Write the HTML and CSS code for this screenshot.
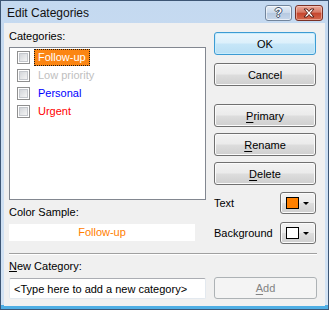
FILE: index.html
```html
<!DOCTYPE html>
<html lang="en">
<head>
    <meta charset="UTF-8">
    <title>Edit Categories</title>
    <link rel="stylesheet" href="styles.css">
</head>
<body>
    <div class="window">
        <div class="titlebar">
            <span class="title">Edit Categories</span>
            <div class="caption-buttons">
                <button class="cap-btn cap-help">?</button>
                <button class="cap-btn cap-close">
                    <svg width="14" height="10" viewBox="0 0 14 10">
                        <path d="M2 1 L5 1 L7 3.5 L9 1 L12 1 L8.5 5 L12 9 L9 9 L7 6.5 L5 9 L2 9 L5.5 5 Z" fill="#fff" stroke="#5b2018" stroke-width="1" stroke-linejoin="round"/>
                    </svg>
                </button>
            </div>
        </div>

        <div class="client">
            <div class="top">
                <div class="left-col">
                    <div class="lbl">Categories:</div>
                    <div class="listbox">
                        <div class="item">
                            <span class="check"></span>
                            <span class="name selected">Follow-up</span>
                        </div>
                        <div class="item">
                            <span class="check"></span>
                            <span class="name low">Low priority</span>
                        </div>
                        <div class="item">
                            <span class="check"></span>
                            <span class="name personal">Personal</span>
                        </div>
                        <div class="item">
                            <span class="check"></span>
                            <span class="name urgent">Urgent</span>
                        </div>
                    </div>
                    <div class="lbl sample-lbl">Color Sample:</div>
                    <div class="sample">Follow-up</div>
                </div>

                <div class="right-col">
                    <button class="btn btn-default">OK</button>
                    <button class="btn btn-cancel">Cancel</button>
                    <button class="btn btn-primary"><u>P</u>rimary</button>
                    <button class="btn btn-stack"><u>R</u>ename</button>
                    <button class="btn btn-stack"><u>D</u>elete</button>
                    <div class="color-row color-row-text">
                        <span>Text</span>
                        <button class="btn picker">
                            <span class="swatch swatch-orange"></span>
                            <span class="arrow"></span>
                        </button>
                    </div>
                    <div class="color-row color-row-bg">
                        <span>Background</span>
                        <button class="btn picker">
                            <span class="swatch swatch-white"></span>
                            <span class="arrow"></span>
                        </button>
                    </div>
                </div>
            </div>

            <div class="divider"></div>

            <div class="lbl new-lbl"><u>N</u>ew Category:</div>
            <div class="new-row">
                <input class="new-input" type="text" value="&lt;Type here to add a new category&gt;">
                <button class="btn btn-add" disabled><u>A</u>dd</button>
            </div>
        </div>
    </div>
</body>
</html>
```

FILE: styles.css
```css
/* Global settings */
:root {
    --client: #f0f0f0;
    --font-ui: 'Liberation Sans', Arial, sans-serif;
}

body {
    margin: 0;
    font-family: var(--font-ui);
    font-size: 11px;
    color: #000;
}

/* Window frame */
.window {
    width: 329px;
    height: 310px;
    box-sizing: border-box;
    border: 1px solid #3d5675;
    background: linear-gradient(#c4d9f0, #c9dcf1 30%, #d3e3f4 98.6%, #4faee4 98.6%);
    display: flex;
    flex-direction: column;
}

.titlebar {
    height: 22px;
    display: flex;
    align-items: center;
    padding: 0 5px 0 6px;
}

.title {
    font-size: 12px;
    color: #111;
    padding-top: 1px;
}

.caption-buttons {
    margin-left: auto;
    display: flex;
    gap: 3px;
    padding-top: 1px;
}

.cap-btn {
    height: 16px;
    border-radius: 3px;
    padding: 0;
    display: flex;
    align-items: center;
    justify-content: center;
}

.cap-help {
    width: 27px;
    border: 1px solid #72859c;
    background: linear-gradient(#e4edf7, #c9d8ea 50%, #b6c9e0 50%, #c6d6ea);
    box-shadow: inset 0 0 0 1px rgba(255, 255, 255, 0.6);
    font-family: var(--font-ui);
    font-size: 12px;
    font-weight: bold;
    color: #fff;
    text-shadow: 1px 0 #3f4f66, -1px 0 #3f4f66, 0 1px #3f4f66, 0 -1px #3f4f66;
}

.cap-close {
    width: 28px;
    border: 1px solid #7a3126;
    background: linear-gradient(#e9a99a, #d77a66 45%, #c5442d 50%, #d4684d);
    box-shadow: inset 0 0 0 1px rgba(255, 220, 210, 0.5);
}

/* Client area */
.client {
    flex: 1;
    margin: 0 3px 3px 3px;
    background: var(--client);
    padding: 7px 0 0 5px;
}

.top {
    display: flex;
    gap: 8px;
}

.left-col {
    width: 197px;
    display: flex;
    flex-direction: column;
}

.lbl {
    line-height: 13px;
    height: 13px;
}

.listbox {
    margin-top: 4px;
    height: 153px;
    box-sizing: border-box;
    border: 1px solid #828790;
    background: #fff;
}

.item {
    height: 18px;
    display: flex;
    align-items: center;
    padding-left: 7px;
}

.check {
    width: 13px;
    height: 13px;
    box-sizing: border-box;
    border: 1px solid #8f8f8f;
    background: #fff;
    position: relative;
}

.check::after {
    content: "";
    position: absolute;
    left: 1px;
    top: 1px;
    right: 1px;
    bottom: 1px;
    border: 1px solid #c4c7cc;
    background: linear-gradient(135deg, #d3d6da, #f4f4f4);
}

.name {
    margin-left: 4px;
    height: 17px;
    line-height: 15px;
    padding: 0 3px;
    box-sizing: border-box;
    border: 1px solid transparent;
}

.name.selected {
    background: #fb8512;
    color: #fff;
    border: 1px dotted #1a1a1a;
}

.name.low {
    color: #c0c0c0;
}

.name.personal {
    color: #0000ff;
}

.name.urgent {
    color: #ff0000;
}

.sample-lbl {
    margin-top: 6px;
}

.sample {
    margin-top: 5px;
    width: 186px;
    height: 17px;
    line-height: 17px;
    background: #fff;
    color: #ff8000;
    text-align: center;
}

/* Right column buttons */
.right-col {
    width: 102px;
    margin-top: 2px;
    display: flex;
    flex-direction: column;
}

.btn {
    font-family: var(--font-ui);
    font-size: 11px;
    color: #000;
    height: 23px;
    padding: 0;
    box-sizing: border-box;
    border: 1px solid #707070;
    border-radius: 3px;
    background: linear-gradient(#f2f2f2, #ebebeb 48%, #dddddd 52%, #cfcfcf);
    box-shadow: inset 0 0 0 1px #fbfbfb;
}

.btn u {
    text-decoration-thickness: 1px;
    text-underline-offset: 2px;
}

.btn-default {
    border-color: #3d9bd3;
    background: linear-gradient(#eaf6fd, #dcf0fb 48%, #c6e6f8 52%, #b9dff4);
    box-shadow: inset 0 0 0 1px #c8ecfc;
}

.btn-cancel {
    margin-top: 8px;
}

.btn-primary {
    margin-top: 18px;
}

.btn-stack {
    margin-top: 6px;
}

.color-row {
    display: flex;
    align-items: center;
    justify-content: space-between;
}

.color-row-text {
    margin-top: 7px;
}

.color-row-bg {
    margin-top: 8px;
}

.picker {
    width: 36px;
    height: 22px;
    display: flex;
    align-items: center;
    padding-left: 5px;
}

.swatch {
    width: 13px;
    height: 12px;
    box-sizing: border-box;
    border: 1px solid #000;
}

.swatch-orange {
    background: #ff8000;
}

.swatch-white {
    background: #fff;
}

.arrow {
    margin-left: 4px;
    width: 0;
    height: 0;
    border-left: 3px solid transparent;
    border-right: 3px solid transparent;
    border-top: 3px solid #000;
}

/* Bottom section */
.divider {
    margin-top: 9px;
    width: 308px;
    height: 0;
    border-top: 1px solid #a0a0a0;
    border-bottom: 1px solid #fff;
}

.new-lbl {
    margin-top: 5px;
}

.new-row {
    margin-top: 4px;
    display: flex;
    align-items: flex-end;
    gap: 8px;
}

.new-input {
    width: 197px;
    height: 21px;
    box-sizing: border-box;
    margin: 0;
    border: 1px solid #e3e9ef;
    border-top-color: #abadb3;
    border-radius: 2px;
    padding: 0 4px;
    font-family: var(--font-ui);
    font-size: 11px;
    color: #000;
    background: #fff;
}

.btn-add {
    width: 103px;
    height: 22px;
    border-color: #adb2b5;
    background: #f4f4f4;
    box-shadow: none;
    color: #838383;
}
```
